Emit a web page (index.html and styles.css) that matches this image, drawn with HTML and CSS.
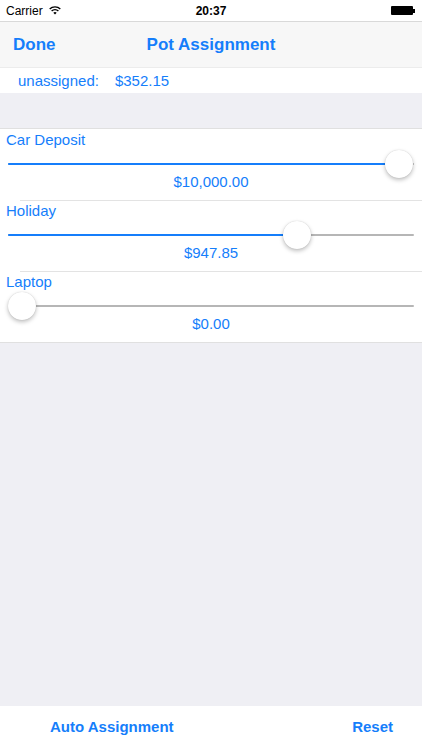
FILE: index.html
```html
<!DOCTYPE html>
<html>
<head>
	<meta charset="utf-8">
	<title>Pot Assignment</title>
	<link rel="stylesheet" href="styles.css">
</head>
<body>
	<div class="screen">
		<div class="status">
			<div class="status-left">
				<span>Carrier</span>
				<svg class="wifi" width="12" height="9" viewBox="0 0 12 9">
					<path d="M6 8.6 L4.3 6.8 A2.5 2.5 0 0 1 7.7 6.8 Z" fill="#000"/>
					<path d="M2.6 5.1 A4.9 4.9 0 0 1 9.4 5.1" stroke="#000" stroke-width="1.4" fill="none"/>
					<path d="M0.7 3.1 A7.5 7.5 0 0 1 11.3 3.1" stroke="#000" stroke-width="1.4" fill="none"/>
				</svg>
			</div>
			<div class="clock">20:37</div>
			<div class="battery"><div class="battery-body"></div><div class="battery-nub"></div></div>
		</div>
		<div class="navbar">
			<span class="done">Done</span>
			<span class="title">Pot Assignment</span>
		</div>
		<div class="unassigned">
			<span>unassigned:</span>
			<span>$352.15</span>
		</div>
		<div class="content">
			<div class="pots">
				<div class="pot">
					<div class="pot-name">Car Deposit</div>
					<div class="slider">
						<div class="track"></div>
						<div class="fill" style="width: 391px"></div>
						<div class="thumb" style="left: 377px"></div>
					</div>
					<div class="pot-value">$10,000.00</div>
				</div>
				<div class="pot">
					<div class="pot-name">Holiday</div>
					<div class="slider">
						<div class="track"></div>
						<div class="fill" style="width: 289px"></div>
						<div class="thumb" style="left: 275px"></div>
					</div>
					<div class="pot-value">$947.85</div>
				</div>
				<div class="pot">
					<div class="pot-name">Laptop</div>
					<div class="slider">
						<div class="track"></div>
						<div class="fill" style="width: 0px"></div>
						<div class="thumb" style="left: 0px"></div>
					</div>
					<div class="pot-value">$0.00</div>
				</div>
			</div>
		</div>
		<div class="toolbar">
			<span>Auto Assignment</span>
			<span>Reset</span>
		</div>
	</div>
</body>
</html>
```

FILE: styles.css
```css
*{
	padding: 0;
	margin: 0;
	box-sizing: border-box;
}
body{
	font-family: "Liberation Sans", Arial, sans-serif;
	background: #fff;
}
.screen{
	width: 422px;
	height: 750px;
	display: flex;
	flex-direction: column;
}
.status{
	height: 22px;
	display: flex;
	align-items: center;
	justify-content: space-between;
	padding: 0 6px;
	font-size: 12px;
	color: #000;
	border-bottom: 1px solid #d9d9d9;
	position: relative;
}
.status-left{
	display: flex;
	align-items: center;
	gap: 6px;
	width: 80px;
}
.wifi{
	margin-top: -1px;
}
.clock{
	font-weight: bold;
	position: absolute;
	left: 0;
	right: 0;
	text-align: center;
	top: 4px;
}
.battery{
	display: flex;
	align-items: center;
	margin-right: 1px;
}
.battery-body{
	width: 22px;
	height: 9px;
	background: #000;
	border-radius: 1px;
}
.battery-nub{
	width: 2px;
	height: 4px;
	background: #000;
}
.navbar{
	height: 45px;
	background: #f7f7f7;
	display: flex;
	align-items: center;
	position: relative;
	color: #157efb;
	font-size: 17px;
	font-weight: bold;
}
.done{
	padding-left: 13px;
}
.title{
	position: absolute;
	left: 0;
	right: 0;
	text-align: center;
	pointer-events: none;
}
.unassigned{
	height: 26px;
	line-height: 26px;
	font-size: 15px;
	color: #157efb;
	padding-left: 18px;
	display: flex;
	gap: 16px;
	border-top: 1px solid #ececec;
}
.content{
	flex: 1;
	background: #efeff4;
	padding-top: 35px;
}
.pots{
	background: #fff;
	border-top: 1px solid #e0e0e0;
	border-bottom: 1px solid #e0e0e0;
}
.pot{
	height: 71px;
	padding: 0 8px;
	color: #157efb;
	font-size: 15px;
	position: relative;
}
.pot + .pot::before{
	content: "";
	position: absolute;
	top: 0;
	left: 20px;
	right: 0;
	border-top: 1px solid #e3e3e3;
}
.pot-name{
	line-height: 20px;
	margin-left: -2px;
	padding-top: 1px;
}
.slider{
	position: relative;
	height: 28px;
}
.track{
	position: absolute;
	left: 0;
	right: 0;
	top: 13px;
	height: 2px;
	background: #b6b6b6;
	border-radius: 1px;
}
.fill{
	position: absolute;
	left: 0;
	top: 13px;
	height: 2px;
	background: #157efb;
	border-radius: 1px;
}
.thumb{
	position: absolute;
	top: 0;
	width: 28px;
	height: 28px;
	border-radius: 50%;
	background: #fff;
	box-shadow: 0 2px 4px rgba(0,0,0,0.25), 0 0 1px rgba(0,0,0,0.2);
}
.pot-value{
	line-height: 20px;
	margin-top: -6px;
	text-align: center;
}
.toolbar{
	height: 44px;
	background: #fff;
	display: flex;
	align-items: center;
	justify-content: space-between;
	padding: 0 29px 3px 50px;
	color: #157efb;
	font-size: 15px;
	font-weight: bold;
}
```
